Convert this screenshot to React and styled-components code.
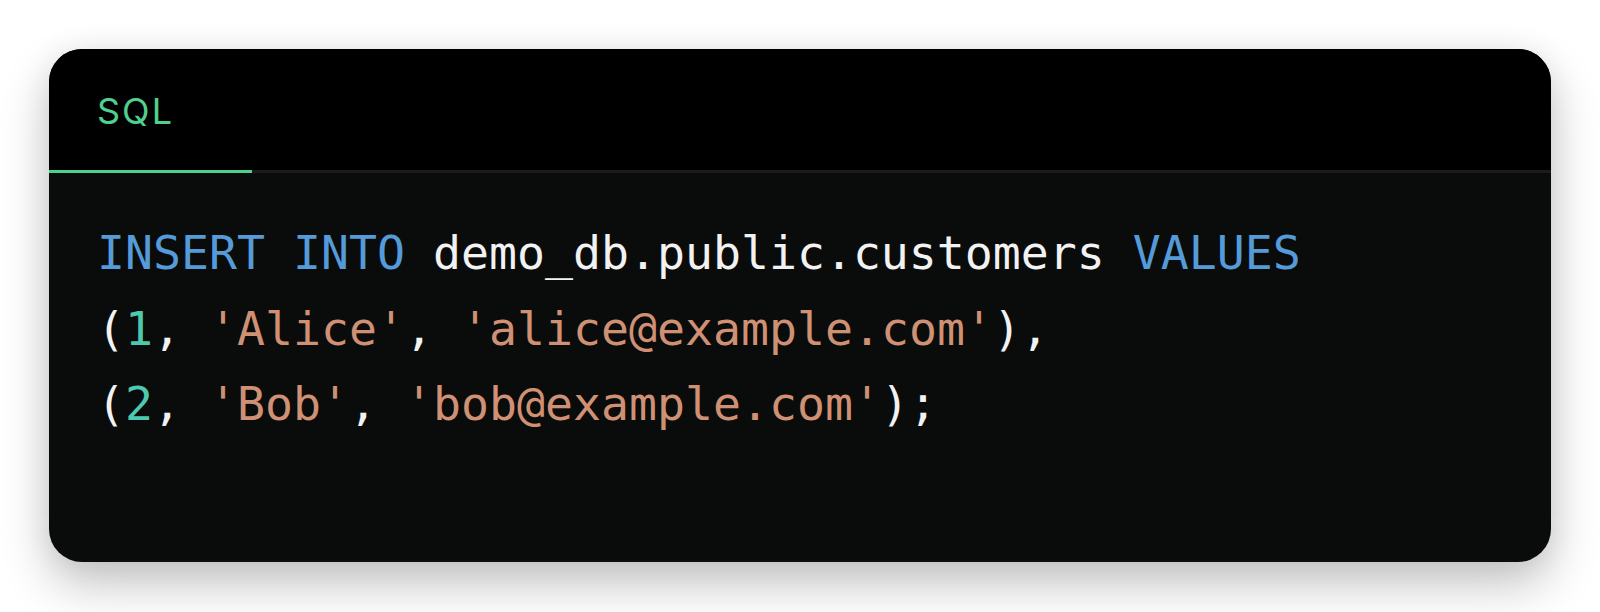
import React from "react";
import styled, { createGlobalStyle } from "styled-components";

const GlobalStyle = createGlobalStyle`
  html, body {
    margin: 0;
    padding: 0;
    background: #ffffff;
  }
`;

const lines = [
  [
    { t: "INSERT INTO", k: "keyword" },
    { t: " demo_db.public.customers ", k: "plain" },
    { t: "VALUES", k: "keyword" },
  ],
  [
    { t: "(", k: "plain" },
    { t: "1", k: "number" },
    { t: ", ", k: "plain" },
    { t: "'Alice'", k: "string" },
    { t: ", ", k: "plain" },
    { t: "'alice@example.com'", k: "string" },
    { t: "),", k: "plain" },
  ],
  [
    { t: "(", k: "plain" },
    { t: "2", k: "number" },
    { t: ", ", k: "plain" },
    { t: "'Bob'", k: "string" },
    { t: ", ", k: "plain" },
    { t: "'bob@example.com'", k: "string" },
    { t: ");", k: "plain" },
  ],
];

const tokenColors = {
  keyword: "#559bd9",
  plain: "#f2f2f2",
  number: "#4ec9b0",
  string: "#cf9074",
};

const App = () => {
  return (
    <Page>
      <GlobalStyle />
      <Card>
        <TabBar>
          <Tab $active>SQL</Tab>
        </TabBar>
        <Code>
          {lines.map((line, i) => (
            <Line key={i}>
              {line.map((tok, j) => (
                <Token key={j} $kind={tok.k}>
                  {tok.t}
                </Token>
              ))}
            </Line>
          ))}
        </Code>
      </Card>
    </Page>
  );
};

export default App;

const Page = styled.div`
  box-sizing: border-box;
  height: 100vh;
  padding: 49px 49px 50px;
  display: flex;
`;

const Card = styled.div`
  flex: 1;
  display: flex;
  flex-direction: column;
  background: #0a0c0b;
  border-radius: 33px;
  overflow: hidden;
  box-shadow: 0 22px 48px rgba(0, 0, 0, 0.24), 0 0 30px rgba(0, 0, 0, 0.06);
`;

const TabBar = styled.div`
  display: flex;
  height: 121px;
  background: #000000;
  border-bottom: 3px solid #1a1c1c;
`;

const Tab = styled.div`
  box-sizing: border-box;
  width: 203px;
  display: flex;
  align-items: center;
  padding-left: 48px;
  padding-top: 2px;
  margin-bottom: -3px;
  font-family: "Inter", "Noto Sans", sans-serif;
  font-size: 36px;
  letter-spacing: 2px;
  color: #4fd08f;
  border-bottom: 3px solid ${({ $active }) => ($active ? "#4fd08f" : "transparent")};
`;

const Code = styled.pre`
  flex: 1;
  margin: 0;
  padding: 43px 48px 0;
  font-family: "DejaVu Sans Mono", "Liberation Mono", monospace;
  font-size: 46.5px;
  line-height: 75.5px;
`;

const Line = styled.div`
  white-space: pre;
`;

const Token = styled.span`
  color: ${({ $kind }) => tokenColors[$kind]};
`;
